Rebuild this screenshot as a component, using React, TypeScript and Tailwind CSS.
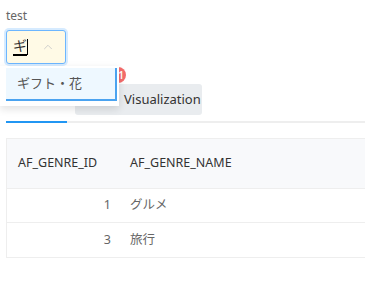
import { ChevronUp } from "lucide-react"

const rows = [
  { id: 1, name: "グルメ" },
  { id: 3, name: "旅行" },
]

export default function App() {
  return (
    <div
      className="relative h-[290px] w-[365px] overflow-hidden bg-white text-[13px] text-[#333]"
      style={{ fontFamily: '"Noto Sans", "Noto Sans CJK JP", sans-serif' }}
    >
      <div className="px-[6px] pt-[7px]">
        {/* Field */}
        <div className="text-[12px] leading-[18px] text-[#666]">test</div>
        <div className="relative mt-[5px] flex h-[34px] w-[60px] items-center rounded-[3px] border border-[#6cb6ff] bg-[#fffae6] pl-[6px] shadow-[0_0_0_2px_#d6ebff]">
          <span className="border-b-2 border-black text-[14px] leading-[16px] text-[#333]">ギ</span>
          <span className="h-[16px] w-px bg-black" />
          <ChevronUp className="ml-auto mr-[10px] h-[14px] w-[14px] text-[#c8c8c8]" strokeWidth={1.5} />
        </div>

        {/* Tabs */}
        <div className="-mr-[6px] mt-[20px] flex items-end border-b-2 border-[#eeeeee]">
          <div className="-mb-[2px] h-[33px] w-[61px] border-b-2 border-[#2196f3]" />
          <div className="mb-[6px] ml-[8px] flex h-[31px] w-[127px] items-center rounded-[3px] bg-[#e9ecef] pl-[49px] text-[13px] text-[#333]">
            Visualization
          </div>
        </div>

        {/* Table */}
        <div className="mt-[15px] w-[400px] border border-[#eeeeee]">
          <div className="flex h-[50px] items-center border-b border-[#eeeeee] bg-[#f8f9fb] text-[12.5px] text-[#333]">
            <div className="w-[112px] pl-[11px]">AF_GENRE_ID</div>
            <div className="pl-[11px]">AF_GENRE_NAME</div>
          </div>
          {rows.map((r, i) => (
            <div
              key={r.id}
              className={`flex h-[34px] items-center text-[12.5px] text-[#666] ${i === 0 ? "border-b border-[#eeeeee]" : ""}`}
            >
              <div className="w-[112px] pr-[8px] text-right">{r.id}</div>
              <div className="pl-[11px]">{r.name}</div>
            </div>
          ))}
        </div>
      </div>

      {/* Badge on tab */}
      <span className="absolute left-[110px] top-[67px] flex h-[16px] w-[16px] items-center justify-center rounded-full bg-[#f56c6c] pl-[6px] text-[10px] font-semibold text-white">
        1
      </span>

      {/* Dropdown */}
      <div className="absolute left-0 top-[66px] w-[119px] bg-white pb-[5px] pt-[2px] shadow-[0_3px_8px_rgba(0,0,0,0.12)]">
        <div className="ml-[6px] flex h-[33px] w-[111px] items-center border-b-2 border-r-2 border-[#4aa3f0] bg-[#eef8ff] pl-[11px] text-[13px] text-[#555]">
          ギフト・花
        </div>
      </div>
    </div>
  )
}
